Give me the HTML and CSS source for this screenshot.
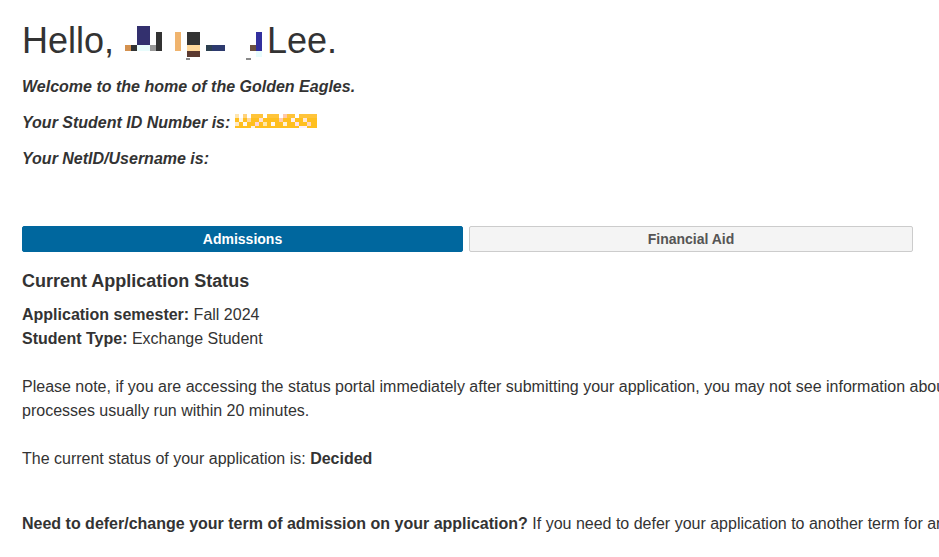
FILE: index.html
```html
<!DOCTYPE html>
<html lang="en">
<head>
<meta charset="utf-8">
<title>Application Status</title>
<link rel="stylesheet" href="styles.css">
</head>
<body>
<main class="page">
  <h1 class="hello">Hello, <svg class="censor-name" width="143" height="34" viewBox="0 0 143 34" aria-hidden="true">
      <rect x="1" y="19" width="6" height="6" fill="#d4914f"/>
      <rect x="7" y="19" width="6" height="6" fill="#333333"/>
      <rect x="13" y="0" width="13" height="19" fill="#33306e"/>
      <rect x="13" y="19" width="13" height="6" fill="#e8fcfc"/>
      <rect x="26" y="19" width="6" height="6" fill="#999999"/>
      <rect x="32" y="6" width="6" height="19" fill="#333333"/>
      <rect x="51" y="6" width="6" height="19" fill="#f0b46e"/>
      <rect x="63" y="6" width="13" height="13" fill="#333333"/>
      <rect x="63" y="19" width="13" height="6" fill="#ffd89b"/>
      <rect x="63" y="25" width="13" height="6" fill="#5c3a30"/>
      <rect x="82" y="19" width="6" height="6" fill="#2d4050"/>
      <rect x="88" y="19" width="13" height="6" fill="#2d3a6e"/>
      <rect x="126" y="19" width="6" height="6" fill="#6b5040"/>
      <rect x="132" y="6" width="6" height="19" fill="#33309e"/>
      <rect x="132" y="25" width="6" height="6" fill="#e8fcfc"/>
      <rect x="62" y="32" width="4" height="2" fill="#8a8a8a"/>
      <rect x="122" y="32" width="5" height="2" fill="#8a8a8a"/>
    </svg>Lee.</h1>

  <p class="intro">Welcome to the home of the Golden Eagles.</p>
  <p class="intro">Your Student ID Number is: <svg class="censor-id" width="82" height="14" viewBox="0 0 82 14" aria-hidden="true">
      <rect x="0" y="0" width="4" height="4" fill="#ffe6b0"/>
      <rect x="0" y="4" width="82" height="10" fill="#ffbf1f"/>
      <rect x="8" y="0" width="4" height="4" fill="#ffd27a"/>
      <rect x="16" y="0" width="12" height="4" fill="#ffc43a"/>
      <rect x="32" y="0" width="12" height="4" fill="#ffc43a"/>
      <rect x="48" y="0" width="4" height="4" fill="#ffc9a8"/>
      <rect x="52" y="0" width="8" height="4" fill="#ffc43a"/>
      <rect x="64" y="0" width="18" height="4" fill="#ffc43a"/>
      <rect x="4" y="4" width="4" height="4" fill="#fff4e4"/>
      <rect x="12" y="4" width="4" height="4" fill="#ffd9a0"/>
      <rect x="24" y="4" width="4" height="4" fill="#ffe0d8"/>
      <rect x="44" y="4" width="4" height="4" fill="#ffcab0"/>
      <rect x="56" y="4" width="4" height="4" fill="#fff0f0"/>
      <rect x="68" y="4" width="4" height="4" fill="#ffe8d8"/>
      <rect x="0" y="8" width="4" height="4" fill="#ffe9c4"/>
      <rect x="8" y="8" width="4" height="4" fill="#fff8ee"/>
      <rect x="20" y="8" width="4" height="4" fill="#ffd4d8"/>
      <rect x="28" y="8" width="4" height="4" fill="#ffe7a8"/>
      <rect x="36" y="8" width="4" height="4" fill="#fff6f0"/>
      <rect x="48" y="8" width="4" height="4" fill="#fff2d6"/>
      <rect x="60" y="8" width="4" height="4" fill="#ffe2ea"/>
      <rect x="72" y="8" width="4" height="4" fill="#ffd6c0"/>
      <rect x="16" y="12" width="4" height="2" fill="#fff2e4"/>
      <rect x="64" y="12" width="8" height="2" fill="#fff0f6"/>
    </svg></p>
  <p class="intro">Your NetID/Username is:</p>

  <nav class="tabs">
    <a class="tab tab-active" href="#admissions">Admissions</a>
    <a class="tab tab-inactive" href="#aid">Financial Aid</a>
  </nav>

  <section class="status">
    <h2 class="status-title">Current Application Status</h2>
    <p class="lines"><strong>Application semester:</strong> Fall 2024<br><strong>Student Type:</strong> Exchange Student</p>
    <p class="lines nowrap">Please note, if you are accessing the status portal immediately after submitting your application, you may not see information about your application yet. Our<br>processes usually run within 20 minutes.</p>
    <p class="lines">The current status of your application is: <strong>Decided</strong></p>
    <p class="lines nowrap defer"><strong>Need to defer/change your term of admission on your application?</strong> If you need to defer your application to another term for any reason, please contact us.</p>
  </section>
</main>
</body>
</html>
```

FILE: styles.css
```css
html, body {
  margin: 0;
  padding: 0;
  overflow: hidden;
  background: #ffffff;
}

body {
  font-family: "Liberation Sans", Arial, sans-serif;
  font-size: 16px;
  color: #333333;
}

.page {
  width: 1140px;
  padding-left: 22px;
  box-sizing: border-box;
}

.hello {
  margin: 21px 0 0 0;
  font-size: 36px;
  line-height: 40px;
  font-weight: normal;
  color: #333333;
  white-space: nowrap;
}

.censor-name {
  vertical-align: -7px;
}

.intro {
  margin: 16px 0 0 0;
  line-height: 20px;
  font-weight: bold;
  font-style: italic;
}

.censor-id {
  vertical-align: baseline;
}

.tabs {
  display: flex;
  gap: 6px;
  width: 891px;
  margin-top: 57px;
}

.tab {
  display: block;
  height: 26px;
  box-sizing: border-box;
  line-height: 24px;
  text-align: center;
  font-size: 14px;
  font-weight: bold;
  text-decoration: none;
  border-radius: 2px;
  border: 1px solid transparent;
}

.tab-active {
  flex: 0 0 441px;
  background: #00679e;
  border-color: #00679e;
  color: #ffffff;
}

.tab-inactive {
  flex: 0 0 444px;
  background: #f4f4f4;
  border-color: #cccccc;
  color: #555555;
}

.status-title {
  margin: 18px 0 0 0;
  font-size: 18px;
  line-height: 22px;
  font-weight: bold;
}

.lines {
  margin: 24px 0 0 0;
  line-height: 24px;
}

.status-title + .lines {
  margin-top: 11px;
}

.nowrap {
  white-space: nowrap;
}

.defer {
  margin-top: 41px;
}
```
